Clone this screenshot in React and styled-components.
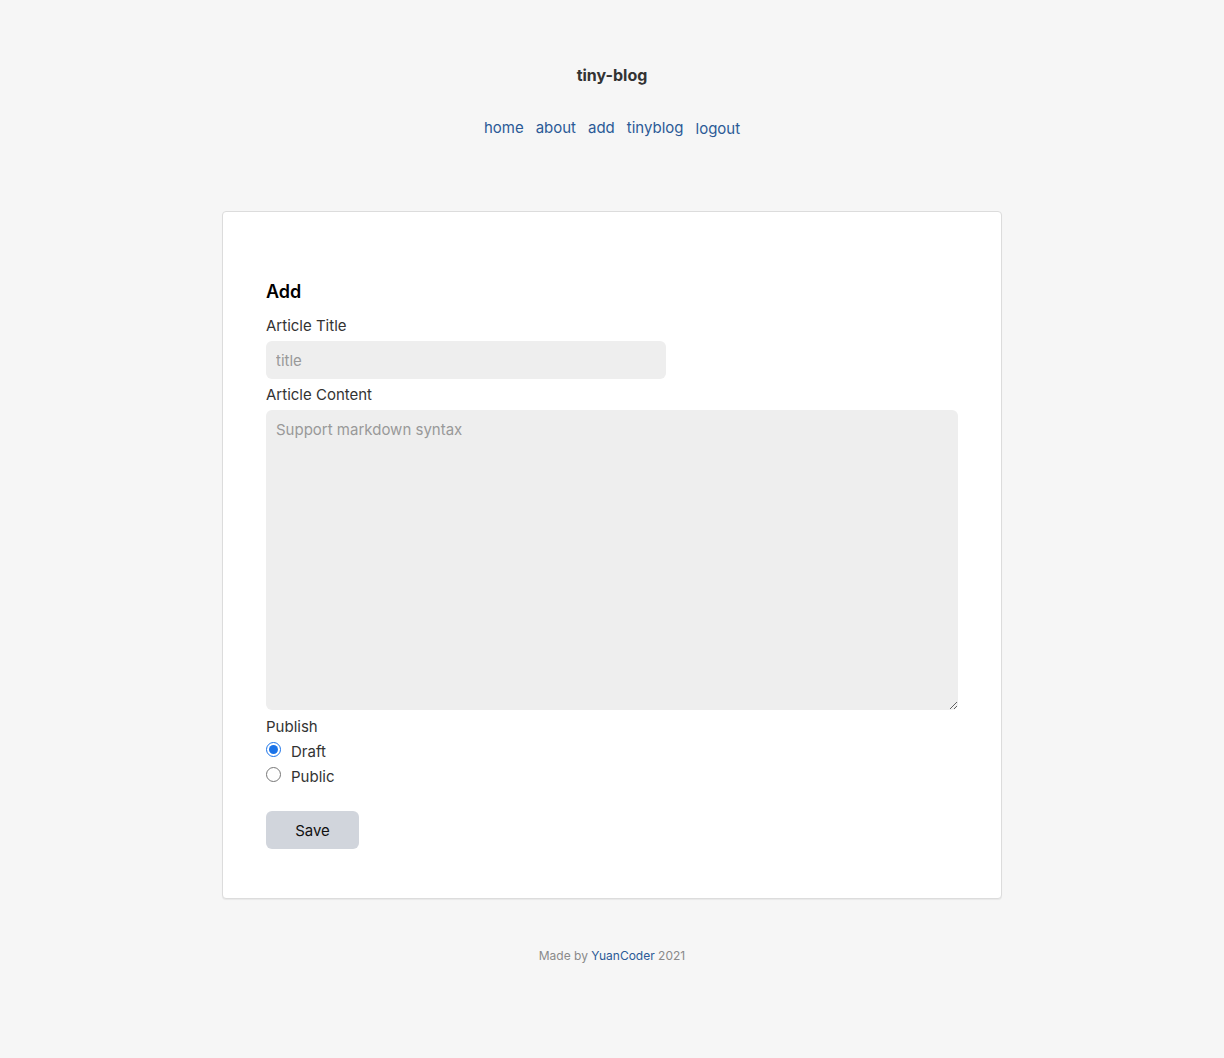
import React from 'react';
import styled, { createGlobalStyle } from 'styled-components';

const GlobalStyle = createGlobalStyle`
  html, body {
    margin: 0;
    padding: 0;
    background: #f6f6f6;
    font-family: Inter, "Noto Sans", "Liberation Sans", sans-serif;
    color: #333;
  }
  * { box-sizing: border-box; }
`;

const Page = styled.div`
  min-height: 1058px;
  display: flex;
  flex-direction: column;
  align-items: center;
`;

const Header = styled.header`
  padding-top: 64px;
  display: flex;
  flex-direction: column;
  align-items: center;
`;

const SiteTitle = styled.h1`
  margin: 0;
  font-size: 16px;
  line-height: 22px;
  font-weight: 700;
  color: #333;
`;

const Nav = styled.nav`
  margin-top: 31px;
  display: flex;
  gap: 12px;
  align-items: center;
`;

const NavLink = styled.a`
  font-size: 15px;
  line-height: 22px;
  color: #2b5a96;
  text-decoration: none;
  transform: translateY(${(p) => (p.$low ? '1px' : '0')});
`;

const Card = styled.main`
  margin-top: 72px;
  width: 780px;
  background: #fff;
  border: 1px solid #dcdcdc;
  border-radius: 4px;
  box-shadow: 0 1px 1px rgba(0, 0, 0, 0.06);
  padding: 68px 43px 49px;
`;

const Heading = styled.h2`
  margin: 0 0 11px;
  font-size: 18px;
  line-height: 24px;
  font-weight: 600;
  color: #000;
`;

const Label = styled.label`
  display: block;
  font-size: 15px;
  line-height: 22px;
  color: #333;
  margin: ${(p) => p.$mt || 0}px 0 ${(p) => (p.$mb ?? 4)}px;
`;

const TextInput = styled.input`
  display: block;
  width: 400px;
  height: 38px;
  border: none;
  border-radius: 6px;
  background: #eee;
  padding: 0 10px;
  font: inherit;
  font-size: 15px;
  color: #333;
  outline: none;
  &::placeholder { color: #999; }
`;

const TextArea = styled.textarea`
  display: block;
  width: 692px;
  height: 300px;
  border: none;
  border-radius: 6px;
  background: #eee;
  padding: 10px;
  font: inherit;
  font-size: 15px;
  line-height: 20px;
  color: #333;
  outline: none;
  resize: vertical;
  &::placeholder { color: #999; }
`;

const RadioRow = styled.label`
  display: flex;
  align-items: center;
  gap: 10px;
  height: 25px;
  font-size: 15px;
  color: #333;
`;

const Radio = styled.input`
  margin: 0;
  width: 15px;
  height: 15px;
  accent-color: #1a73e8;
  transform: translateY(-2px);
`;

const SaveButton = styled.button`
  margin-top: 22px;
  width: 93px;
  height: 38px;
  border: none;
  border-radius: 6px;
  background: #d1d5dc;
  font: inherit;
  font-size: 15px;
  color: #111;
  cursor: pointer;
`;

const Footer = styled.footer`
  margin-top: 49px;
  font-size: 12px;
  line-height: 16px;
  color: #8a8a8a;
`;

const FooterLink = styled.a`
  color: #2b5a96;
  text-decoration: none;
`;

export default function App() {
  return (
    <Page>
      <GlobalStyle />
      <Header>
        <SiteTitle>tiny-blog</SiteTitle>
        <Nav>
          <NavLink href="#">home</NavLink>
          <NavLink href="#">about</NavLink>
          <NavLink href="#">add</NavLink>
          <NavLink href="#">tinyblog</NavLink>
          <NavLink href="#" $low>logout</NavLink>
        </Nav>
      </Header>
      <Card>
        <Heading>Add</Heading>
        <Label htmlFor="title">Article Title</Label>
        <TextInput id="title" placeholder="title" />
        <Label htmlFor="content" $mt={5}>Article Content</Label>
        <TextArea id="content" placeholder="Support markdown syntax" />
        <Label $mt={6} $mb={1}>Publish</Label>
        <RadioRow>
          <Radio type="radio" name="publish" defaultChecked />
          Draft
        </RadioRow>
        <RadioRow>
          <Radio type="radio" name="publish" />
          Public
        </RadioRow>
        <SaveButton>Save</SaveButton>
      </Card>
      <Footer>
        Made by <FooterLink href="#">YuanCoder</FooterLink> 2021
      </Footer>
    </Page>
  );
}
